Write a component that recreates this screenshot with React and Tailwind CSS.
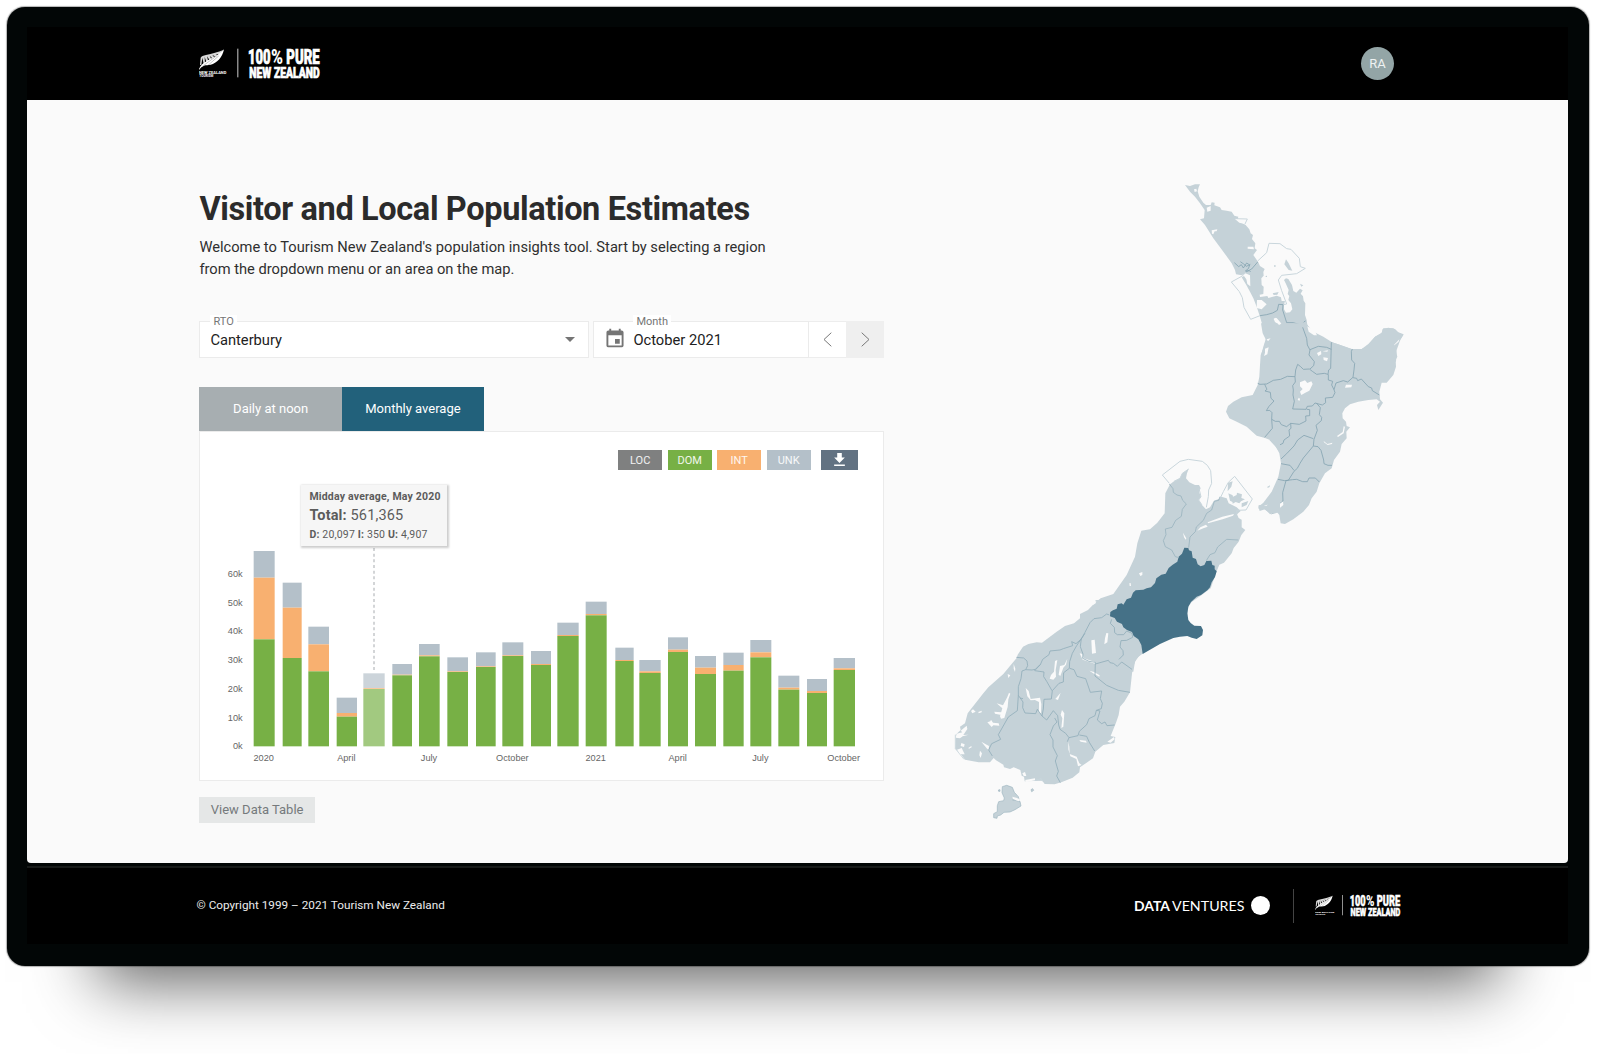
import React from "react";

const LAND = "#c5d2d8";
const BG = "#fafafa";

function Logo({ className }) {
  return (
    <svg viewBox="57 38 365 120" className={className} fill="#fff">
      <path d="M132 57C128 80 110 100 92 103C84 105 78 103 72 106C64 110 61 113 59 118L57 116C61 106 70 98 84 90C102 80 119 72 132 57Z" />
      <path d="M130 59C115 66 96 70 78 74C70 76 64 78 62 82L60 104L64 104L67 82L71 101L75 100L74 80L80 97L85 94L81 78L90 91L95 88L89 76L99 86L104 82L97 74L108 79L114 75L107 72L119 71Z" opacity=".85" />
      <path d="M70 106L112 75M84 105L116 77" stroke="#000" strokeWidth="1.2" opacity=".6" fill="none" />
      <text x="57" y="130" fontSize="9.5" fontWeight="700" fontFamily="Roboto, sans-serif" textLength="82" lengthAdjust="spacingAndGlyphs">NEW ZEALAND</text>
      <text x="58" y="141" fontSize="8" fontWeight="700" fontFamily="Roboto, sans-serif" textLength="42" lengthAdjust="spacingAndGlyphs">TOURISM</text>
      <rect x="172" y="55" width="3" height="86" opacity=".8" />
      <g fontFamily="Roboto, sans-serif" fontWeight="900" stroke="#fff" strokeWidth="2.2">
        <text x="204" y="100" fontSize="61" textLength="68" lengthAdjust="spacingAndGlyphs">100</text>
        <text x="273" y="100" fontSize="61" textLength="36" lengthAdjust="spacingAndGlyphs" strokeWidth="0">%</text>
        <text x="319" y="100" fontSize="61" textLength="100" lengthAdjust="spacingAndGlyphs">PURE</text>
        <text x="208" y="142" fontSize="46" textLength="66" lengthAdjust="spacingAndGlyphs">NEW</text>
        <text x="282" y="142" fontSize="46" textLength="137" lengthAdjust="spacingAndGlyphs">ZEALAND</text>
      </g>
    </svg>
  );
}

// left, right, top, international top, domestic top (in thirds of a pixel)
const BARS = [
  [191, 254, 243, 323, 508],
  [278, 335, 338, 413, 564],
  [355, 417, 470, 523, 604],
  [440, 501, 683, 729, 740],
  [520, 584, 610, 654, 657],
  [607, 666, 582, 614, 616],
  [687, 749, 522, 556, 559],
  [772, 834, 562, 604, 606],
  [858, 917, 547, 589, 591],
  [937, 1000, 517, 556, 558],
  [1023, 1083, 543, 582, 585],
  [1102, 1166, 458, 495, 498],
  [1187, 1250, 395, 432, 436],
  [1276, 1331, 533, 570, 573],
  [1348, 1412, 570, 604, 609],
  [1434, 1494, 502, 539, 546],
  [1515, 1578, 558, 593, 612],
  [1600, 1661, 548, 585, 602],
  [1681, 1744, 510, 547, 562],
  [1765, 1828, 617, 653, 659],
  [1851, 1911, 627, 663, 669],
  [1931, 1995, 564, 595, 600],
];

const X_LABELS = [
  [221, "2020"], [469, "April"], [717, "July"], [967, "October"],
  [1217, "2021"], [1463, "April"], [1711, "July"], [1961, "October"],
];

function Chart() {
  return (
    <svg viewBox="60 234 1980 666" className="h-[222px] w-[660px]">
      <line x1="552" y1="234" x2="552" y2="606" stroke="#d3d5d7" strokeWidth="6" strokeDasharray="9 8" />
      {BARS.map(([l, r, t, i, d], n) => (
        <g key={n} opacity={n === 4 ? 0.68 : 1}>
          <rect x={l} y={t} width={r - l} height={i - t} fill="#b4c0c9" />
          <rect x={l} y={i} width={r - l} height={d - i} fill="#f8b070" />
          <rect x={l} y={d} width={r - l} height={829 - d} fill="#77b045" />
        </g>
      ))}
      <g fontFamily="'Liberation Sans', Arial, sans-serif" fontSize="27.6" fill="#666">
        {[0, 1, 2, 3, 4, 5, 6].map((k) => (
          <text key={k} x="158" y={838 - k * 86.3} textAnchor="end">{k === 0 ? "0k" : `${k}0k`}</text>
        ))}
        {X_LABELS.map(([x, s], n) => (
          <text key={n} x={x} y="873" textAnchor="middle">{s}</text>
        ))}
      </g>
    </svg>
  );
}

function MapNZ() {
  return (
    <svg viewBox="940 170 480 660" className="h-[660px] w-[480px]" strokeLinejoin="round">
      {/* upper North Island */}
      <g transform="translate(1180 170) scale(.33333)">
        <path fill={LAND} d="M15 45L30 48L45 43L60 43L56 52L53 64L58 80L70 98L78 105L92 105L95 97L104 98L103 106L120 112L125 120L140 122L155 125L163 137L175 140L172 150L185 158L197 165L208 178L212 190L219 195L216 207L226 220L224 235L231 240L220 255L234 275L240 288L254 297L250 306L251 317L244 325L245 345L251 350L250 372L239 374L240 381L262 378L265 384L290 377L303 382L305 393L315 393L312 404L312 418L318 428L330 427L337 418L333 400L325 390L328 378L323 372L326 360L317 340L312 330L318 325L325 327L336 345L340 363L349 368L360 356L368 361L362 371L369 379L371 392L376 400L375 435L380 450L382 465L400 485L430 500L455 516L480 525L515 537L545 537L565 522L585 500L605 490L608 477L625 473L645 477L655 487L671 493L660 512L650 540L648 575L243 575L243 557L250 530L258 505L250 475L240 440L230 410L220 385L210 365L199 345L185 322L192 318L199 328L202 342L211 349L210 316L196 310L185 316L168 313L165 300L155 280L130 245L100 205L75 165L60 148L72 145L74 120L60 100L45 80L30 65Z" />
        <g fill={LAND}>
          <path d="M313 283L318 268L326 280L337 302L326 300ZM360 341L370 346L364 350ZM282 286l5 0l0 4l-5 0ZM257 318l4 -1l0 4l-4 0ZM278 370L296 366L292 374L281 375Z" />
        </g>
        <g fill={BG}>
          <path d="M42 58l7 -2l2 8l-7 2ZM80 113L92 108L92 122L82 125ZM165 147L202 147L195 162L178 158ZM95 181L112 178L110 184L104 184L100 193L96 191ZM203 230L220 230L222 238L203 236ZM231 390L245 390L260 403L245 418L230 414ZM281 447L287 443L302 459L298 465L285 456ZM384 470L404 482L409 496L400 494L385 484ZM412 548L425 540L424 553L412 557ZM430 556L442 563L440 571L430 568ZM427 544l14 -4l0 4ZM252 535l12 -3l-2 16l-9 8l3 -12ZM259 508l12 -4l-2 5l-9 4ZM640 526L655 512L652 517L642 526Z" />
        </g>
        <path fill="none" stroke="#c9d6dc" strokeWidth="3" d="M202 305L233 273L260 248L267 220L300 221L320 236L333 238L358 265L361 290L376 295L350 311L305 316L295 330L305 362L320 402L310 404M202 302L187 318L154 336L178 365L187 383L192 412L212 448L240 437M165 146L202 147L195 162" />
        <path fill="none" stroke="#83a2b0" strokeWidth="2.4" d="M163 278L176 290L184 284L190 294L200 279L209 285L205 296L196 303L208 302L212 306M181 275L191 282L199 289L211 283M233 276L215 297L198 306M240 437L260 434L278 429L292 421L296 403L309 404L308 420L320 458L340 458L362 465L370 474L381 507L382 524L390 540L386 552L405 570M363 465L376 452M376 455L372 470M390 538L420 531L455 533M455 516L455 570M516 537L515 570" />
      </g>
      {/* lower North Island */}
      <g transform="translate(1210 310) scale(.33333)">
        <path fill={LAND} d="M153 40L158 70L168 90L160 115L152 135L150 165L148 200L143 225L128 255L95 262L70 275L54 288L48 305L58 325L80 335L110 350L140 377L165 384L180 390L197 409L208 430L213 460L205 500L185 545L160 578L145 590L149 603L165 598L173 605L180 613L200 605L208 615L212 640L225 642L250 628L280 605L297 585L305 565L320 545L328 520L345 490L365 475L372 450L390 425L395 402L410 385L409 365L420 352L410 348L408 335L398 325L397 310L405 295L420 283L445 275L475 270L500 268L510 275L501 285L505 300L519 278L510 268L508 245L515 218L530 218L550 195L558 170L557 150L562 140L556 115L565 95L580 75L560 65L550 55L520 55L515 68L495 80L470 110L455 117L425 117L385 103L360 95L320 75L298 55L287 35L270 40Z" />
        <path fill={BG} d="M270 217L285 211L292 219L304 214L308 222L298 242L286 248L274 255L270 245L278 237L270 229ZM266 263l4 3l-1 6l-6 -2ZM321 129L333 123L334 133L325 138ZM340 142L354 144L351 154L341 150ZM408 224L426 224L424 232L405 233ZM338 124l16 -3l-2 4ZM341 393L352 402L367 398L366 402L353 405L342 397ZM381 378L398 366L401 349L405 350L401 370L384 381ZM205 578L219 573L220 585L205 598L203 588ZM163 586L174 584L173 594L165 594ZM165 116L176 112L172 133L162 138L165 128ZM170 88l12 -3l-8 9ZM292 49L314 63L321 76L312 76L296 65ZM191 26L200 24L214 41L207 45ZM552 105L568 88L566 95L553 106Z" />
        <path fill="none" stroke="#83a2b0" strokeWidth="2.4" d="M143 220L150 223L170 222L190 211L212 208L232 199L255 200L257 180L263 163L272 170L280 178L298 177L307 184L320 193L343 190L354 193L356 180L362 175L364 97M278 52L290 85L292 105L300 120L297 135L313 155L311 167L300 177M300 119L325 109L350 112L364 118M427 117L424 125L425 150L434 160L432 180L429 202L413 216L400 212L378 219L372 239L365 225L368 214L355 210L355 193M429 203L440 205L443 212L454 207L475 230L485 234L487 242L508 255M372 239L375 248L368 262L346 264L347 278L337 285L315 279L307 288L292 289L288 298L248 297L253 274L249 255L250 240L248 227L256 216L255 200M164 223L171 238L165 243L181 247L183 265L192 273L177 289L169 302L179 301L186 308L185 328L196 334L208 334L214 344L230 350L242 340L268 343L288 333L287 318L299 317L299 299L290 298M320 280L331 293L328 314L335 322L334 332L318 346L322 361L312 388L310 408L280 444L270 460L262 475L252 484L235 511L228 512L218 548L219 573L202 585L197 604L185 612M185 328L187 355L164 382M242 340L243 355L237 360L239 378L222 390L219 400L198 410M213 447L230 431L252 408L263 390L282 376L310 386M310 408L324 410L333 421L341 450L342 461L354 466L366 466M213 461L240 466L252 481M204 508L224 512L248 509L260 508L278 515L292 515L297 504L316 504L328 516" />
      </g>
      {/* lower South Island */}
      <g transform="translate(940 600) scale(.33333)">
        <path fill={LAND} d="M605 160L587 180L578 205L575 230L570 277L553 305L540 320L536 345L528 368L512 408L526 411L523 429L490 435L466 455L459 475L420 502L418 517L398 533L364 547L344 553L314 552L307 542L254 544L252 530L245 527L241 510L221 502L210 507L192 502L190 494L168 481L161 474L150 487L116 487L75 479L60 460L46 446L47 404L62 390L60 380L75 370L83 340L97 322L130 280L145 262L190 222L208 200L230 174L233 164L249 140L265 132L290 127L306 128L350 95L375 78L402 70L440 38L462 18L467 0L553 0L555 10L530 45L560 80L585 96Z" />
        <path fill={LAND} stroke="#9db5bf" strokeWidth="2" d="M187 560L200 556L217 562L223 577L235 590L237 598L218 600L240 604L243 618L225 629L210 636L192 637L182 645L172 648L171 655L161 653L161 641L172 635L172 617L176 605L191 602L193 594L186 578ZM273 569l5 -3l3 5l-6 4ZM175 570l5 -1l0 5l-4 0Z" />
      </g>
      {/* upper South Island */}
      <g transform="translate(1080 440) scale(.33333)">
        <path fill={LAND} d="M270 133L282 124L300 115L307 100L326 87L321 100L318 115L328 127L345 135L357 135L362 145L357 155L363 170L356 180L366 195L378 208L390 202L402 182L418 176L424 170L440 175L446 190L470 202L482 213L471 223L476 234L485 239L485 262L496 270L484 285L476 305L461 324L455 340L432 368L418 374L410 394L392 445L362 467L335 486L325 500L320 540L250 600L190 640L175 650L165 665L160 695L0 695L0 522L24 510L45 488L62 475L100 462L140 405L165 350L172 310L184 272L210 268L232 248L254 220L256 160Z" />
        <path fill={LAND} d="M444 128L458 124L454 140L443 154ZM456 172L470 165L471 158L486 163L484 174L495 178L483 184L478 190L467 186L458 191ZM445 160L458 166L462 188L450 182ZM485 190L505 183L500 195L485 202ZM536 195L560 197L580 175L600 130L600 215L580 222L566 217L552 207L536 207ZM568 0L600 0L600 38L585 18ZM562 140l8 -4l-1 5l-6 3Z" />
        <path fill={BG} d="M352 272L361 262L378 254L383 260L370 265ZM383 247L427 230L462 222L459 227L428 238L384 250ZM309 278L319 295L317 299L312 292ZM177 400L187 396L187 405L181 408ZM148 430l4 -1l1 9l-4 0ZM38 490l11 -8l-2 8l-8 5Z" />
        <path fill="#457187" d="M313 323L325 324L327 331L335 334L338 353L348 357L353 373L362 379L373 375L379 363L394 362L397 375L404 377L404 388L410 394L405 411L395 427L390 442L382 451L363 465L350 470L333 486L325 500L322 520L325 540L332 549L343 557L363 558L369 570L367 586L350 597L335 593L322 588L300 590L280 594L240 612L188 642L184 615L175 598L161 588L156 576L141 570L130 562L126 552L111 545L104 534L90 529L91 516L99 511L110 506L113 493L125 490L130 494L140 478L153 473L159 458L167 451L190 449L200 445L213 442L225 429L229 415L244 404L257 401L266 384L278 374L292 365L296 350L306 341Z" />
        <path fill="none" stroke="#c9d6dc" strokeWidth="3" d="M268 130L247 105L300 64L325 58L367 64L382 76L392 92L395 130L386 150L385 170L379 202M421 174L430 155L445 127L464 109L517 177L498 210L470 211L471 223M282 124L300 115L307 100L326 87M357 145L363 170L356 180L366 195" />
        <path fill="none" stroke="#98b2be" strokeWidth="2.4" d="M268 132L279 146L280 157L291 165L303 168L308 181L319 192L307 208L304 229L287 241L276 262L256 267L258 284L250 302L256 320L275 330L286 350L297 353M420 170L416 181L403 184L395 210L380 220L370 241L349 261L346 275L330 291L326 323M379 362L390 344L405 338L413 321L440 298L475 300" />
      </g>
      {/* lakes, fiords and boundaries of the lower South Island */}
      <g transform="translate(940 600) scale(.33333)">
        <path fill={BG} d="M454 121L464 119L468 159L456 161ZM499 99L505 100L502 127L493 133L495 115ZM345 183L352 180L347 210L348 230L340 239L329 236L333 225L342 215ZM360 198L373 195L382 176L378 194L370 203L361 228L356 224ZM257 264L266 273L272 297L300 293L304 312L303 340L297 337L297 306L285 300L272 301L262 289ZM362 278L354 300L346 297ZM419 160L427 162L431 175L465 186L467 192L428 179ZM448 212L462 216L479 226L478 230L463 222ZM366 330L373 340L370 380L364 384L367 355L362 344ZM385 425L388 440L389 462L410 470L418 490L425 495L414 499L409 477L391 469L385 448ZM207 278L211 281L205 298L203 321L193 354L183 356L180 349L187 325L170 310L189 316L202 291ZM163 335L184 337L184 345L165 341ZM142 367L151 364L153 359L159 368L176 370L178 377L160 376L155 381ZM47 413L50 401L67 397L62 392L80 377L82 387L70 405L86 404L68 409L60 415ZM93 333L99 328L107 335L97 340ZM115 336l10 -4l0 5l-9 3ZM64 429L74 433L72 441L62 438ZM85 444l9 -6l1 4l-8 4ZM51 449L65 444L74 463L60 463ZM120 452L126 460L122 474L118 466ZM124 425L140 434L147 438L146 450L140 445ZM418 420l20 2l2 6l-18 -3ZM221 192l5 14l-1 10l-4 -10ZM247 520l8 -4l4 12l-8 0ZM255 540L285 535L285 541L259 546ZM502 425L522 411L524 418L512 428ZM203 222l8 4l-6 8ZM217 590l20 6l0 8l-18 -7Z" />
        <path fill="none" stroke="#c9d6dc" strokeWidth="2.5" d="M46 404L46 446L72 478M285 541L303 536L307 544" />
        <path fill="none" stroke="#8facb9" strokeWidth="2.4" d="M508 45L500 42L485 53L462 56L450 68L435 97L424 117L408 131L395 125L398 137L370 146L360 150L330 153L327 164L308 178L301 194L284 212L312 216L311 230L320 244L336 272M435 100L410 137L397 160L389 185L388 205L371 218L370 246L357 250L337 272L334 297L312 298L310 327L306 348L320 360L340 332L353 347L356 375L360 388L377 400L387 413L414 407L418 394L440 374L447 356L465 347L469 331L484 326L487 310L481 296L485 273L451 277L437 236L411 229L402 209L389 205M424 115L421 140L429 162L428 175L447 184L466 187L465 228L500 256L535 271L570 277M466 192L505 181L510 188L520 190L532 199L545 186L576 208M537 178L550 165L549 152L540 141L543 122L560 121L578 112L576 100L560 93L551 104L532 104L524 98L523 82L511 70L515 58M229 172L251 174L261 183L263 197L257 209L276 210L286 208L301 193M257 209L246 213L243 236L235 260L235 286L232 332L205 351L175 404L182 418L155 431L146 450L157 468M235 286L249 306L248 323L255 339L287 341L292 328L306 348M249 296L240 294M344 354L351 366L340 378L330 404L339 420L339 441L352 467L346 483L355 514L350 528L361 548M469 331L480 333L472 360L485 371L495 366L501 377L524 375M418 405L440 409L448 427L464 453M387 413L382 425" />
      </g>
    </svg>
  );
}

const LEGEND = [
  ["LOC", "bg-[#7f8080]"],
  ["DOM", "bg-[#77b045]"],
  ["INT", "bg-[#f8b070]"],
  ["UNK", "bg-[#b4c0c9]"],
];

export default function App() {
  return (
    <div className="flex h-[1054px] w-[1600px] flex-col overflow-hidden bg-white pl-[7px] pt-[7px] font-['Roboto',sans-serif]">
      <div className="flex h-[959px] w-[1582px] flex-col rounded-[18px] bg-[#020606] pb-[22px] pl-5 pr-[21px] pt-5 shadow-[0_106px_62px_-90px_rgba(0,0,0,0.62),0_0_1px_1px_rgba(0,0,0,0.3)]">
        <header className="flex h-[73.400px] shrink-0 items-center justify-between bg-black pl-[172px] pr-[174px]">
          <Logo className="-mt-px h-[40px] w-[121.67px]" />
          <div className="flex size-[33px] items-center justify-center rounded-full bg-[#93a5a6] text-[13px] text-[#eef2f2]">RA</div>
        </header>

        <main className="flex h-[763px] shrink-0 justify-between rounded-b-[4px] bg-[#fafafa] pl-[172.400px] pr-[148px]">
          <section className="w-[684.600px] pt-[88.800px]">
            <h1 className="whitespace-nowrap text-[32.500px] font-bold leading-10 tracking-[-0.360px] text-[#2b2b2b]">Visitor and Local Population Estimates</h1>
            <p className="mt-[7px] whitespace-nowrap text-[14.680px] leading-[22px] text-[#2f2f2f]">
              Welcome to Tourism New Zealand's population insights tool. Start by selecting a region
              <br />
              from the dropdown menu or an area on the map.
            </p>

            <div className="mt-[40.700px] flex h-[37px]">
              <div className="relative flex w-[390px] items-center justify-between border border-[#ebebeb] bg-white pl-2.5 pr-[13px]">
                <span className="absolute -top-[7px] left-2.5 bg-white px-[3px] text-[11px] leading-[14px] text-[#757575]">RTO</span>
                <span className="pt-px text-[14.700px] text-[#212121]">Canterbury</span>
                <svg viewBox="0 0 10 5" className="h-[5px] w-[10px]"><path d="M0 0h10L5 5z" fill="#757575" /></svg>
              </div>
              <div className="relative ml-[4px] flex w-[215.500px] items-center border border-[#ebebeb] bg-white pl-[11.500px]">
                <span className="absolute -top-[7px] left-[39px] bg-white px-[3px] text-[11px] leading-[14px] text-[#757575]">Month</span>
                <svg viewBox="3 1 18 20" className="h-[19px] w-[18px] -translate-y-[1.500px]" fill="#757575">
                  <path d="M17 12h-5v5h5v-5zM16 1v2H8V1H6v2H5c-1.110 0-1.990.9-1.990 2L3 19c0 1.100.890 2 2 2h14c1.100 0 2-.9 2-2V5c0-1.100-.9-2-2-2h-1V1h-2zm3 18H5V8h14v11z" />
                </svg>
                <span className="ml-[9.500px] pt-px text-[14.700px] text-[#212121]">October 2021</span>
              </div>
              <div className="flex w-[37.500px] items-center justify-center border-y border-[#ededed] bg-white">
                <svg viewBox="0 0 9 15" className="h-[15px] w-[9px]" fill="none" stroke="#777"><path d="M8.300 .7L1 7.500l7.300 6.800" /></svg>
              </div>
              <div className="flex w-[37.500px] items-center justify-center bg-[#efefef]">
                <svg viewBox="0 0 9 15" className="h-[15px] w-[9px]" fill="none" stroke="#777"><path d="M.7 .7L8 7.500L.7 14.300" /></svg>
              </div>
            </div>

            <div className="mt-[29px] flex h-11 text-[13px] text-white">
              <div className="flex w-[142.500px] items-center justify-center bg-[#a7aeb1]">Daily at noon</div>
              <div className="flex w-[142px] items-center justify-center bg-[#22617b]">Monthly average</div>
            </div>

            <div className="flex h-[350px] flex-col border border-[#ebebeb] bg-white">
              <div className="mt-[18px] flex h-5 justify-end gap-[5.500px] pr-[24.800px] text-[11px] text-white/90">
                {LEGEND.map(([label, color]) => (
                  <div key={label} className={`flex w-11 items-center justify-center pt-[2px] ${color}`}>{label}</div>
                ))}
                <div className="ml-[5px] flex w-[37px] items-center justify-center bg-[#627282]">
                  <svg viewBox="5 3 14 17" className="h-[13px] w-[11px]" fill="#fff"><path d="M19 9h-4V3H9v6H5l7 7 7-7zM5 18v2h14v-2H5z" /></svg>
                </div>
              </div>
              <div className="relative z-10 ml-[100.500px] mt-[15px] h-[61.500px] w-[146.500px] whitespace-nowrap bg-[#f6f6f6] pl-[8.500px] pt-[5px] text-[#5c5c5c] shadow-[1px_1px_2px_1px_rgba(0,0,0,0.2)]">
                <div className="text-[10.500px] font-bold leading-[14px] tracking-[0.200px]">Midday average, May 2020</div>
                <div className="mt-[2px] text-[14.500px] leading-[20px] tracking-[0.150px]"><b>Total:</b> 561,365</div>
                <div className="text-[10.500px] leading-[17px] tracking-[0.180px]"><b>D:</b> 20,097 <b>I:</b> 350 <b>U:</b> 4,907</div>
              </div>
              <div className="ml-[9.600px] mt-[1.500px]"><Chart /></div>
            </div>

            <button className="mt-4 block h-[26px] w-[115.500px] bg-[#e5e7e7] text-[13px] text-[#757a7c]">View Data Table</button>
          </section>

          <div className="pt-[69.500px]"><MapNZ /></div>
        </main>

        <footer className="mt-[2.500px] flex h-[78px] shrink-0 items-center border-t-2 border-[#171a19] bg-black pb-px pl-[169.500px] pr-[167px] text-white">
          <span className="pt-px text-[11.760px] text-[#ececec]">© Copyright 1999 – 2021 Tourism New Zealand</span>
          <div className="ml-auto flex items-center pt-px">
            <svg viewBox="0 -4 112 22" className="h-[22px] w-[112px]" fill="#fff" fontFamily="Lato, sans-serif" fontSize="14">
              <text x="0" y="12" fontWeight="700" textLength="36" lengthAdjust="spacingAndGlyphs">DATA</text>
              <text x="38" y="12" textLength="72.500" lengthAdjust="spacingAndGlyphs">VENTURES</text>
            </svg>
            <div className="-mt-px ml-[5.500px] size-[19px] rounded-full bg-white" />
            <div className="ml-[22.500px] mr-[21px] h-[34px] w-[1.500px] bg-[#444]" />
            <Logo className="-mt-[2px] h-[28.300px] w-[86px]" />
          </div>
        </footer>
      </div>
    </div>
  );
}
